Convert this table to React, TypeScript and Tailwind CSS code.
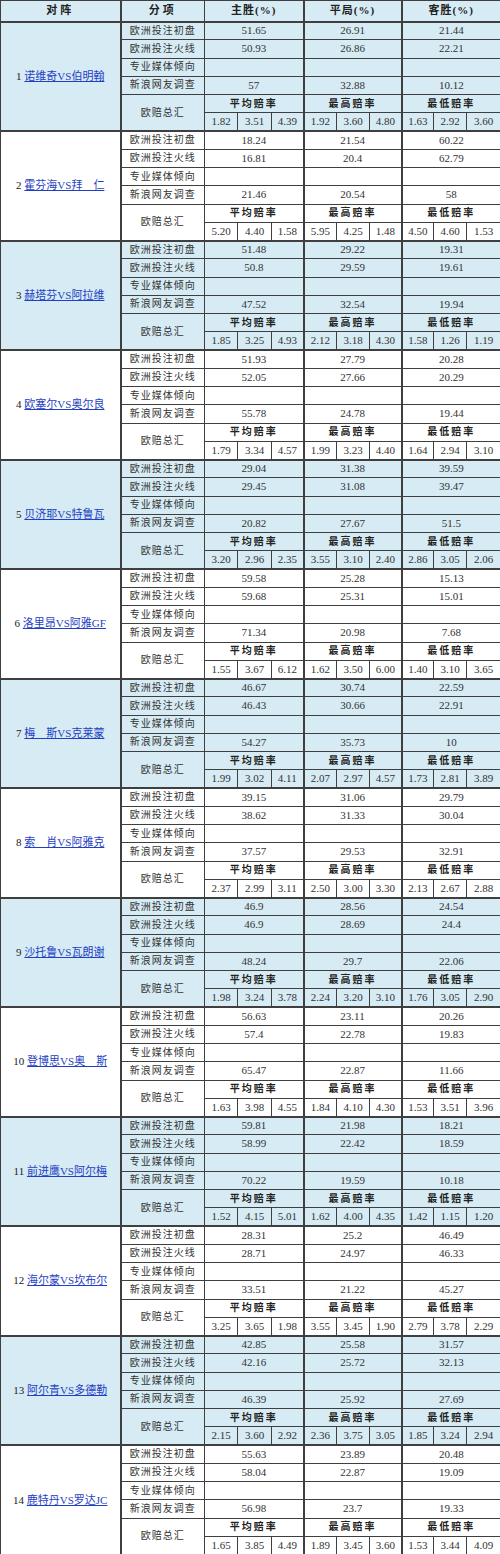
import React from 'react';

type Match = {
  no: number;
  name: string;
  rows: (string[] | null)[];
  avg: string[];
  max: string[];
  min: string[];
};

const matches: Match[] = [
  { no: 1, name: '诺维奇VS伯明翰', rows: [['51.65', '26.91', '21.44'], ['50.93', '26.86', '22.21'], null, ['57', '32.88', '10.12']], avg: ['1.82', '3.51', '4.39'], max: ['1.92', '3.60', '4.80'], min: ['1.63', '2.92', '3.60'] },
  { no: 2, name: '霍芬海VS拜　仁', rows: [['18.24', '21.54', '60.22'], ['16.81', '20.4', '62.79'], null, ['21.46', '20.54', '58']], avg: ['5.20', '4.40', '1.58'], max: ['5.95', '4.25', '1.48'], min: ['4.50', '4.60', '1.53'] },
  { no: 3, name: '赫塔芬VS阿拉维', rows: [['51.48', '29.22', '19.31'], ['50.8', '29.59', '19.61'], null, ['47.52', '32.54', '19.94']], avg: ['1.85', '3.25', '4.93'], max: ['2.12', '3.18', '4.30'], min: ['1.58', '1.26', '1.19'] },
  { no: 4, name: '欧塞尔VS奥尔良', rows: [['51.93', '27.79', '20.28'], ['52.05', '27.66', '20.29'], null, ['55.78', '24.78', '19.44']], avg: ['1.79', '3.34', '4.57'], max: ['1.99', '3.23', '4.40'], min: ['1.64', '2.94', '3.10'] },
  { no: 5, name: '贝济耶VS特鲁瓦', rows: [['29.04', '31.38', '39.59'], ['29.45', '31.08', '39.47'], null, ['20.82', '27.67', '51.5']], avg: ['3.20', '2.96', '2.35'], max: ['3.55', '3.10', '2.40'], min: ['2.86', '3.05', '2.06'] },
  { no: 6, name: '洛里昂VS阿雅GF', rows: [['59.58', '25.28', '15.13'], ['59.68', '25.31', '15.01'], null, ['71.34', '20.98', '7.68']], avg: ['1.55', '3.67', '6.12'], max: ['1.62', '3.50', '6.00'], min: ['1.40', '3.10', '3.65'] },
  { no: 7, name: '梅　斯VS克莱蒙', rows: [['46.67', '30.74', '22.59'], ['46.43', '30.66', '22.91'], null, ['54.27', '35.73', '10']], avg: ['1.99', '3.02', '4.11'], max: ['2.07', '2.97', '4.57'], min: ['1.73', '2.81', '3.89'] },
  { no: 8, name: '索　肖VS阿雅克', rows: [['39.15', '31.06', '29.79'], ['38.62', '31.33', '30.04'], null, ['37.57', '29.53', '32.91']], avg: ['2.37', '2.99', '3.11'], max: ['2.50', '3.00', '3.30'], min: ['2.13', '2.67', '2.88'] },
  { no: 9, name: '沙托鲁VS瓦朗谢', rows: [['46.9', '28.56', '24.54'], ['46.9', '28.69', '24.4'], null, ['48.24', '29.7', '22.06']], avg: ['1.98', '3.24', '3.78'], max: ['2.24', '3.20', '3.10'], min: ['1.76', '3.05', '2.90'] },
  { no: 10, name: '登博思VS奥　斯', rows: [['56.63', '23.11', '20.26'], ['57.4', '22.78', '19.83'], null, ['65.47', '22.87', '11.66']], avg: ['1.63', '3.98', '4.55'], max: ['1.84', '4.10', '4.30'], min: ['1.53', '3.51', '3.96'] },
  { no: 11, name: '前进鹰VS阿尔梅', rows: [['59.81', '21.98', '18.21'], ['58.99', '22.42', '18.59'], null, ['70.22', '19.59', '10.18']], avg: ['1.52', '4.15', '5.01'], max: ['1.62', '4.00', '4.35'], min: ['1.42', '1.15', '1.20'] },
  { no: 12, name: '海尔蒙VS坎布尔', rows: [['28.31', '25.2', '46.49'], ['28.71', '24.97', '46.33'], null, ['33.51', '21.22', '45.27']], avg: ['3.25', '3.65', '1.98'], max: ['3.55', '3.45', '1.90'], min: ['2.79', '3.78', '2.29'] },
  { no: 13, name: '阿尔青VS多德勒', rows: [['42.85', '25.58', '31.57'], ['42.16', '25.72', '32.13'], null, ['46.39', '25.92', '27.69']], avg: ['2.15', '3.60', '2.92'], max: ['2.36', '3.75', '3.05'], min: ['1.85', '3.24', '2.94'] },
  { no: 14, name: '鹿特丹VS罗达JC', rows: [['55.63', '23.89', '20.48'], ['58.04', '22.87', '19.09'], null, ['56.98', '23.7', '19.33']], avg: ['1.65', '3.85', '4.49'], max: ['1.89', '3.45', '3.60'], min: ['1.53', '3.44', '4.09'] },
];

const labels = ['欧洲投注初盘', '欧洲投注火线', '专业媒体倾向', '新浪网友调查'];

const cell = 'border border-[#3f3f3f] p-0 text-center align-middle';
const num = `${cell} text-[11px] text-[#333]`;

function Block({ m }: { m: Match }) {
  const bg = m.no % 2 === 1 ? 'bg-[#d6ebf3]' : 'bg-white';
  return (
    <tbody className={bg}>
      {labels.map((label, i) => (
        <tr key={label} className="h-[18.25px]">
          {i === 0 && (
            <td rowSpan={6} className={`${cell} border-t-2 border-r-2 text-[11px]`}>
              <span className="text-[#222]">{m.no} </span>
              <a href="#" className="text-[#1f3fc4] underline">{m.name}</a>
            </td>
          )}
          <td className={`${cell} ${i === 0 ? 'border-t-2' : ''} text-[10px] tracking-[1px] text-[#333]`}>{label}</td>
          {[0, 1, 2].map((k) => (
            <td key={k} colSpan={3} className={`${num} ${i === 0 ? 'border-t-2' : ''} ${k < 2 ? 'border-r-2' : ''}`}>
              {m.rows[i] ? m.rows[i]![k] : ''}
            </td>
          ))}
        </tr>
      ))}
      <tr className="h-[18.25px]">
        <td rowSpan={2} className={`${cell} text-[10px] tracking-[1px] text-[#333]`}>欧赔总汇</td>
        {['平均赔率', '最高赔率', '最低赔率'].map((t, k) => (
          <td key={t} colSpan={3} className={`${cell} ${k < 2 ? 'border-r-2' : ''} text-[10px] font-bold tracking-[2px] text-[#222]`}>{t}</td>
        ))}
      </tr>
      <tr className="h-[18.25px]">
        {[m.avg, m.max, m.min].map((g, k) =>
          g.map((v, j) => (
            <td key={`${k}-${j}`} className={`${num} text-[10.5px] ${j === 2 && k < 2 ? 'border-r-2' : ''}`}>{v}</td>
          ))
        )}
      </tr>
    </tbody>
  );
}

export default function App() {
  const widths = ['w-[120px]', 'w-[84px]', 'w-[33px]', 'w-[34px]', 'w-[32px]', 'w-[33px]', 'w-[33px]', 'w-[32px]', 'w-[32px]', 'w-[33px]', 'w-[34px]'];
  return (
    <div className="w-[500px] bg-white" style={{ fontFamily: '"Liberation Serif", "Noto Sans CJK SC", serif' }}>
      <table className="w-[500px] table-fixed border-collapse leading-none">
        <colgroup>
          {widths.map((w, i) => (
            <col key={i} className={w} />
          ))}
        </colgroup>
        <thead>
          <tr className="h-[21px] bg-[#d6ebf3]">
            <th className={`${cell} border-r-2 text-[11px] font-bold tracking-[3px] text-[#222]`}>对阵</th>
            <th className={`${cell} text-[11px] font-bold tracking-[3px] text-[#222]`}>分项</th>
            <th colSpan={3} className={`${cell} border-r-2 text-[11px] font-bold tracking-[1px] text-[#222]`}>主胜(%)</th>
            <th colSpan={3} className={`${cell} border-r-2 text-[11px] font-bold tracking-[1px] text-[#222]`}>平局(%)</th>
            <th colSpan={3} className={`${cell} text-[11px] font-bold tracking-[1px] text-[#222]`}>客胜(%)</th>
          </tr>
        </thead>
        {matches.map((m) => (
          <Block key={m.no} m={m} />
        ))}
      </table>
    </div>
  );
}
